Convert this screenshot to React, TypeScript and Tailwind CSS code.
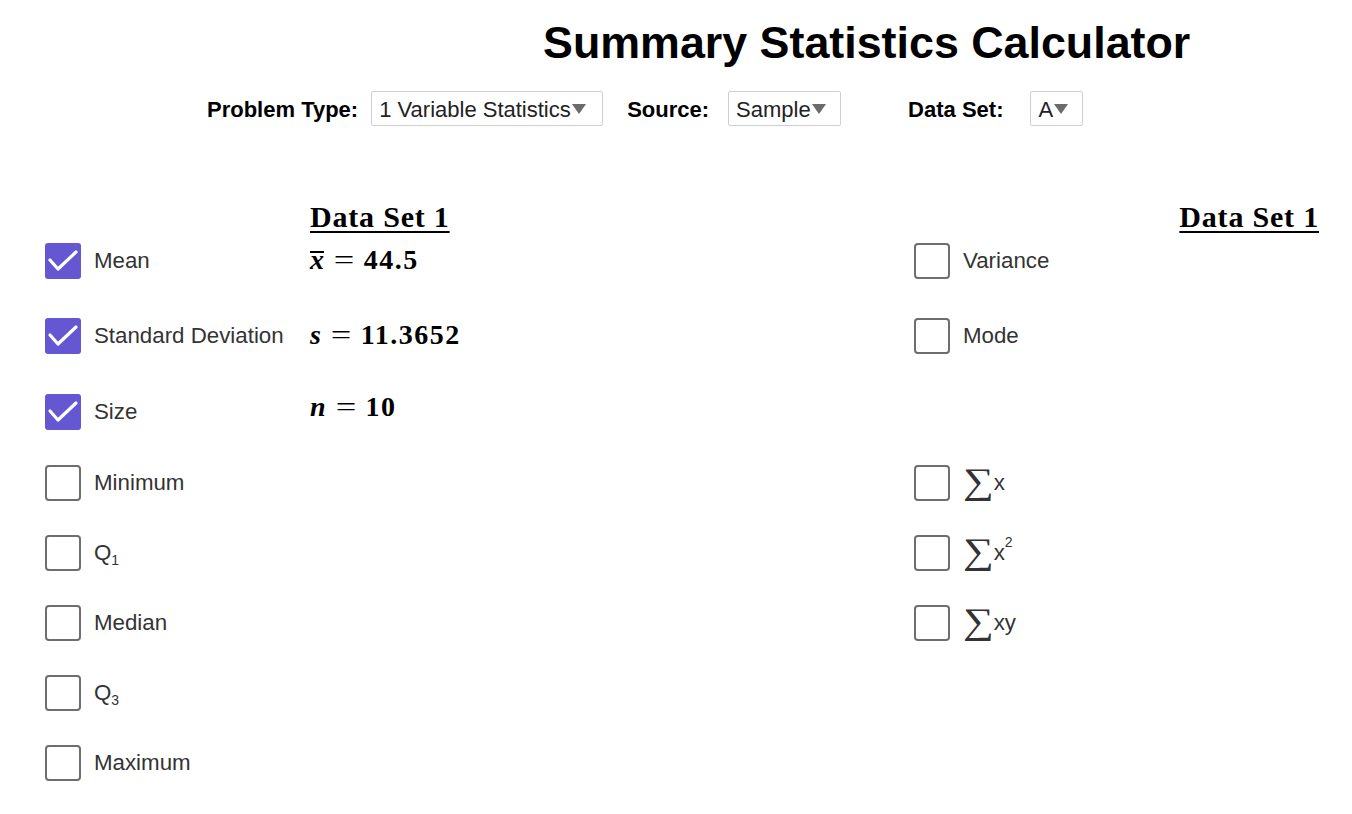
import React from "react"

type Row = {
  gap: string
  label?: React.ReactNode
  checked?: boolean
  value?: React.ReactNode
  right?: React.ReactNode
}

function Caret() {
  return (
    <svg width="14" height="10" viewBox="0 0 14 10" className="ml-[1px] shrink-0">
      <polygon points="0,0 14,0 7,10" fill="#6b6b6b" />
    </svg>
  )
}

function Select({ value, className }: { value: string; className: string }) {
  return (
    <div
      className={`flex h-[35px] items-center border border-[#cfcfcf] rounded-[2px] pl-[7px] pr-[8px] text-[22px] text-[#222] ${className}`}
    >
      <span className="leading-none relative top-[1px]">{value}</span>
      <Caret />
    </div>
  )
}

function Checkbox({ checked }: { checked?: boolean }) {
  if (checked) {
    return (
      <div className="w-9 h-9 rounded-[3px] bg-[#6557d2] flex items-center justify-center shrink-0">
        <svg width="36" height="36" viewBox="0 0 36 36">
          <polyline points="5,17 13,26 31,9" fill="none" stroke="white" strokeWidth="3.2" strokeLinecap="round" strokeLinejoin="round" />
        </svg>
      </div>
    )
  }
  return <div className="w-9 h-9 rounded-[4px] border-[2.5px] border-[#6e6e6e] bg-white shrink-0" />
}

function Sum({ children }: { children: React.ReactNode }) {
  return (
    <span className="flex items-center">
      <span className="inline-block origin-left scale-x-[1.2] font-['Liberation_Serif',serif] text-[36px] leading-none mr-[5px] text-[#333] relative -top-[2px]">∑</span>
      <span>{children}</span>
    </span>
  )
}

const mathFont = "font-['Liberation_Serif',serif] font-bold text-[28px] text-black leading-none"

function Eq() {
  return <span className="inline-block mx-[12px] scale-x-[1.3] font-normal">=</span>
}

const rows: Row[] = [
  {
    gap: "mt-[13px]",
    label: "Mean",
    checked: true,
    value: (
      <span className={mathFont}>
        <span className="relative">
          <i>x</i>
          <span className="absolute left-0 right-0 top-[7px] h-[2px] bg-black" />
        </span>
        <Eq />
        <span className="tracking-[1.5px]">44.5</span>
      </span>
    ),
    right: "Variance",
  },
  {
    gap: "mt-[39px]",
    label: "Standard Deviation",
    checked: true,
    value: (
      <span className={mathFont}>
        <i>s</i>
        <Eq />
        <span className="tracking-[1.5px]">11.3652</span>
      </span>
    ),
    right: "Mode",
  },
  {
    gap: "mt-[40px]",
    label: "Size",
    checked: true,
    value: (
      <span className={`${mathFont} relative -top-[4px]`}>
        <i>n</i>
        <Eq />
        <span className="tracking-[1.5px]">10</span>
      </span>
    ),
  },
  { gap: "mt-[35px]", label: "Minimum", right: <Sum>x</Sum> },
  {
    gap: "mt-[34px]",
    label: (
      <span>
        Q<sub className="text-[14px] align-[-2px]">1</sub>
      </span>
    ),
    right: (
      <Sum>
        x<sup className="text-[14px] align-[6px]">2</sup>
      </Sum>
    ),
  },
  { gap: "mt-[34px]", label: "Median", right: <Sum>xy</Sum> },
  {
    gap: "mt-[34px]",
    label: (
      <span>
        Q<sub className="text-[14px] align-[-2px]">3</sub>
      </span>
    ),
  },
  { gap: "mt-[34px]", label: "Maximum" },
]

export default function App() {
  return (
    <div className="w-[1352px] h-[814px] bg-white font-['Liberation_Sans',Arial,sans-serif] text-[#333] overflow-hidden">
      {/* Title */}
      <h1 className="pl-[543px] pt-[17px] text-[44.8px] font-bold text-black leading-[50px]">
        Summary Statistics Calculator
      </h1>

      {/* Controls */}
      <div className="flex items-center pl-[207px] mt-[24px] text-black">
        <span className="text-[22px] font-bold mr-[13px] relative top-[1px]">Problem Type:</span>
        <Select value="1 Variable Statistics" className="w-[232px]" />
        <span className="text-[22px] font-bold ml-[24px] mr-[19px] relative top-[1px]">Source:</span>
        <Select value="Sample" className="w-[113px]" />
        <span className="text-[22px] font-bold ml-[67px] mr-[27px] relative top-[1px]">Data Set:</span>
        <Select value="A" className="w-[53px]" />
      </div>

      {/* Results */}
      <div className="pl-[45px] mt-[76px]">
        <div className="grid grid-cols-[265px_604px_405px] items-end h-[28px]">
          <div />
          <div className="font-['Liberation_Serif',serif] font-bold text-[30px] leading-none text-black underline underline-offset-[4px] decoration-[1.5px] tracking-[0.8px]">
            Data Set 1
          </div>
          <div className="text-right font-['Liberation_Serif',serif] font-bold text-[30px] leading-none text-black underline underline-offset-[4px] decoration-[1.5px] tracking-[0.8px]">
            Data Set 1
          </div>
        </div>

        {rows.map((row, i) => (
          <div key={i} className={`grid grid-cols-[265px_604px_405px] items-center h-9 ${row.gap}`}>
            <div className="flex items-center">
              <Checkbox checked={row.checked} />
              <span className="ml-[13px] text-[22.3px] leading-none">{row.label}</span>
            </div>
            <div>{row.value}</div>
            <div className="flex items-center">
              {row.right && (
                <>
                  <Checkbox />
                  <span className="ml-[13px] text-[22.3px] leading-none">{row.right}</span>
                </>
              )}
            </div>
          </div>
        ))}
      </div>
    </div>
  )
}
